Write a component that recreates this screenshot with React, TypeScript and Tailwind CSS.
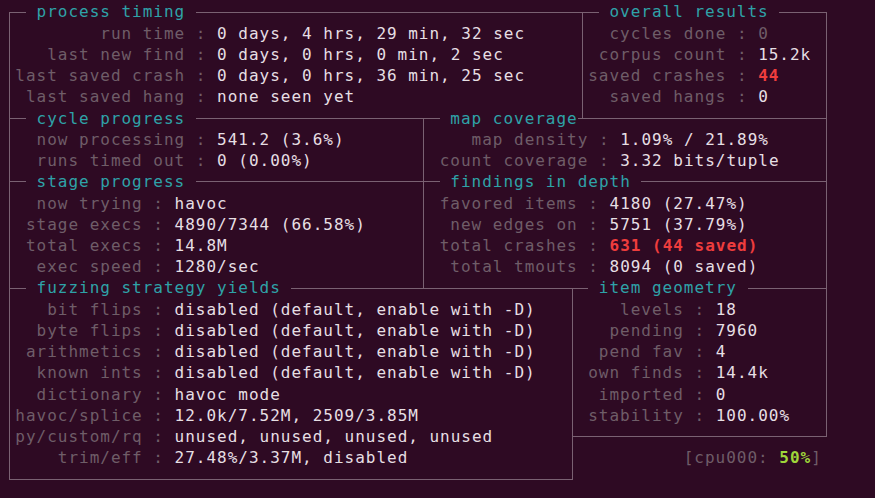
import React from 'react';

// terminal cell: 10.62 x 21.24
const bg = 'bg-[#2e0a23]';
const dim = 'text-[#6f5d68]';
const val = 'text-[#e6dfe3]';
const red = 'text-[#ee3d3d] font-bold';
const green = 'text-[#9fd63a] font-bold';

type Line = { pos: string; label: string; value: string; vc?: string };

const boxes = [
  'col-[1/56] row-[1/7]',
  'col-[55/79] row-[1/7]',
  'col-[1/41] row-[6/10]',
  'col-[40/79] row-[6/10]',
  'col-[1/41] row-[9/15]',
  'col-[40/79] row-[9/15]',
  'col-[1/55] row-[14/24]',
  'col-[54/79] row-[14/22]',
];

const titles = [
  { pos: 'col-start-[3] row-start-[1]', text: ' process timing ' },
  { pos: 'col-start-[57] row-start-[1]', text: ' overall results ' },
  { pos: 'col-start-[3] row-start-[6]', text: ' cycle progress ' },
  { pos: 'col-start-[42] row-start-[6]', text: ' map coverage' },
  { pos: 'col-start-[3] row-start-[9]', text: ' stage progress ' },
  { pos: 'col-start-[42] row-start-[9]', text: ' findings in depth ' },
  { pos: 'col-start-[3] row-start-[14]', text: ' fuzzing strategy yields ' },
  { pos: 'col-start-[56] row-start-[14]', text: ' item geometry ' },
];

const lines: Line[] = [
  { pos: 'col-start-[2] row-start-[2]', label: '        run time : ', value: '0 days, 4 hrs, 29 min, 32 sec' },
  { pos: 'col-start-[2] row-start-[3]', label: '   last new find : ', value: '0 days, 0 hrs, 0 min, 2 sec' },
  { pos: 'col-start-[2] row-start-[4]', label: 'last saved crash : ', value: '0 days, 0 hrs, 36 min, 25 sec' },
  { pos: 'col-start-[2] row-start-[5]', label: ' last saved hang : ', value: 'none seen yet' },
  { pos: 'col-start-[56] row-start-[2]', label: '  cycles done : ', value: '0', vc: dim },
  { pos: 'col-start-[56] row-start-[3]', label: ' corpus count : ', value: '15.2k' },
  { pos: 'col-start-[56] row-start-[4]', label: 'saved crashes : ', value: '44', vc: red },
  { pos: 'col-start-[56] row-start-[5]', label: '  saved hangs : ', value: '0' },

  { pos: 'col-start-[2] row-start-[7]', label: '  now processing : ', value: '541.2 (3.6%)' },
  { pos: 'col-start-[2] row-start-[8]', label: '  runs timed out : ', value: '0 (0.00%)' },
  { pos: 'col-start-[41] row-start-[7]', label: '    map density : ', value: '1.09% / 21.89%' },
  { pos: 'col-start-[41] row-start-[8]', label: ' count coverage : ', value: '3.32 bits/tuple' },

  { pos: 'col-start-[2] row-start-[10]', label: '  now trying : ', value: 'havoc' },
  { pos: 'col-start-[2] row-start-[11]', label: ' stage execs : ', value: '4890/7344 (66.58%)' },
  { pos: 'col-start-[2] row-start-[12]', label: ' total execs : ', value: '14.8M' },
  { pos: 'col-start-[2] row-start-[13]', label: '  exec speed : ', value: '1280/sec' },
  { pos: 'col-start-[41] row-start-[10]', label: ' favored items : ', value: '4180 (27.47%)' },
  { pos: 'col-start-[41] row-start-[11]', label: '  new edges on : ', value: '5751 (37.79%)' },
  { pos: 'col-start-[41] row-start-[12]', label: ' total crashes : ', value: '631 (44 saved)', vc: red },
  { pos: 'col-start-[41] row-start-[13]', label: '  total tmouts : ', value: '8094 (0 saved)' },

  { pos: 'col-start-[2] row-start-[15]', label: '   bit flips : ', value: 'disabled (default, enable with -D)' },
  { pos: 'col-start-[2] row-start-[16]', label: '  byte flips : ', value: 'disabled (default, enable with -D)' },
  { pos: 'col-start-[2] row-start-[17]', label: ' arithmetics : ', value: 'disabled (default, enable with -D)' },
  { pos: 'col-start-[2] row-start-[18]', label: '  known ints : ', value: 'disabled (default, enable with -D)' },
  { pos: 'col-start-[2] row-start-[19]', label: '  dictionary : ', value: 'havoc mode' },
  { pos: 'col-start-[2] row-start-[20]', label: 'havoc/splice : ', value: '12.0k/7.52M, 2509/3.85M' },
  { pos: 'col-start-[2] row-start-[21]', label: 'py/custom/rq : ', value: 'unused, unused, unused, unused' },
  { pos: 'col-start-[2] row-start-[22]', label: '    trim/eff : ', value: '27.48%/3.37M, disabled' },
  { pos: 'col-start-[55] row-start-[15]', label: '    levels : ', value: '18' },
  { pos: 'col-start-[55] row-start-[16]', label: '   pending : ', value: '7960' },
  { pos: 'col-start-[55] row-start-[17]', label: '  pend fav : ', value: '4' },
  { pos: 'col-start-[55] row-start-[18]', label: ' own finds : ', value: '14.4k' },
  { pos: 'col-start-[55] row-start-[19]', label: '  imported : ', value: '0' },
  { pos: 'col-start-[55] row-start-[20]', label: ' stability : ', value: '100.00%' },
];

export default function App() {
  return (
    <div className={`w-[875px] h-[498px] overflow-hidden ${bg} pt-[1.4px] pl-[4.69px]`}>
      <div className="grid grid-cols-[repeat(78,10.62px)] grid-rows-[repeat(23,21.24px)] font-['DejaVu_Sans_Mono',monospace] text-[16px] leading-[21.24px] tracking-[0.987px] whitespace-pre">
        {boxes.map((b) => (
          <div key={b} className={`${b} mx-[4.81px] my-[10.12px] border border-[#7a6172]`} />
        ))}
        {titles.map((t) => (
          <div key={t.text} className={`${t.pos} col-span-[20] w-max ${bg} text-[#2ea2a8]`}>
            {t.text}
          </div>
        ))}
        {lines.map((l) => (
          <div key={l.pos} className={`${l.pos} w-max`}>
            <span className={dim}>{l.label}</span>
            <span className={l.vc ?? val}>{l.value}</span>
          </div>
        ))}
        <div className="col-start-[65] row-start-[22] w-max">
          <span className={dim}>[cpu000: </span>
          <span className={green}>50%</span>
          <span className={dim}>]</span>
        </div>
      </div>
    </div>
  );
}
